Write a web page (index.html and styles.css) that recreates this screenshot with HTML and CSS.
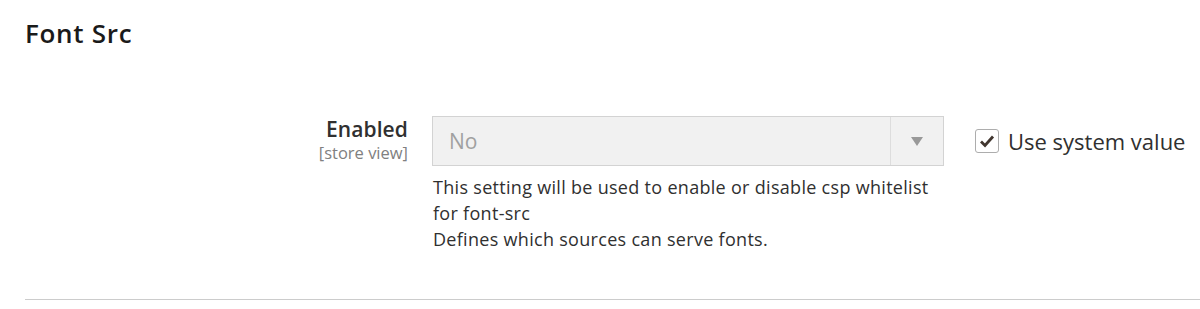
FILE: index.html
```html
<!DOCTYPE html>
<html lang="en">
<head>
<meta charset="utf-8">
<title>Font Src</title>
<link rel="stylesheet" href="styles.css">
</head>
<body>
<section class="section">
  <h2 class="section-title">Font Src</h2>
  <div class="field">
    <div class="field-label">
      <span class="label-text">Enabled</span>
      <span class="scope">[store view]</span>
    </div>
    <div class="field-control">
      <div class="select">
        <span class="select-value">No</span>
        <span class="select-arrow"></span>
      </div>
      <p class="note">This setting will be used to enable or disable csp whitelist for font-src<br>Defines which sources can serve fonts.</p>
    </div>
    <label class="use-default">
      <span class="checkbox">
        <svg width="16" height="14" viewBox="0 0 16 14"><path d="M2 7.5 L6 11.5 L14 2.5" fill="none" stroke="#41362f" stroke-width="2.8"/></svg>
      </span>
      <span class="use-default-text">Use system value</span>
    </label>
  </div>
  <div class="divider"></div>
</section>
</body>
</html>
```

FILE: styles.css
```css
html, body {
  margin: 0;
  padding: 0;
  background: #ffffff;
}
body {
  font-family: "Open Sans", "Noto Sans", sans-serif;
  color: #303030;
}
.section {
  padding: 0 0 0 25px;
}
.section-title {
  margin: 0;
  padding-top: 16px;
  font-size: 26px;
  line-height: 34px;
  font-weight: 600;
  color: #1a1a1a;
  letter-spacing: 0.7px;
}
.field {
  display: flex;
  align-items: flex-start;
  margin-top: 66px;
}
.field-label {
  width: 383px;
  display: flex;
  flex-direction: column;
  align-items: flex-end;
}
.label-text {
  font-size: 21px;
  font-weight: 600;
  line-height: 26px;
  color: #303030;
  letter-spacing: 0.1px;
}
.scope {
  font-size: 16.5px;
  line-height: 22px;
  color: #808080;
}
.field-control {
  margin-left: 24px;
  width: 512px;
}
.select {
  height: 50px;
  box-sizing: border-box;
  border: 1px solid #d3d3d3;
  background: #f1f1f1;
  display: flex;
  align-items: center;
}
.select-value {
  flex: 1;
  padding-left: 16px;
  font-size: 21px;
  color: #a0a0a0;
}
.select-arrow {
  width: 52px;
  height: 100%;
  border-left: 1px solid #dddddd;
  display: flex;
  align-items: center;
  justify-content: center;
}
.select-arrow::after {
  content: "";
  border-left: 6.5px solid transparent;
  border-right: 6.5px solid transparent;
  border-top: 9px solid #999999;
}
.note {
  margin: 8px 0 0 1px;
  font-size: 18px;
  line-height: 26px;
  letter-spacing: 0.3px;
  color: #303030;
}
.use-default {
  margin-left: 31px;
  display: flex;
  align-items: center;
  margin-top: 11px;
}
.checkbox {
  width: 24px;
  height: 24px;
  box-sizing: border-box;
  border: 1px solid #adadad;
  border-radius: 3px;
  background: #fff;
  display: flex;
  align-items: center;
  justify-content: center;
}
.use-default-text {
  margin-left: 9px;
  font-size: 22px;
  line-height: 28px;
  color: #303030;
}
.divider {
  margin-top: 47px;
  height: 1px;
  background: #cccccc;
}
```
